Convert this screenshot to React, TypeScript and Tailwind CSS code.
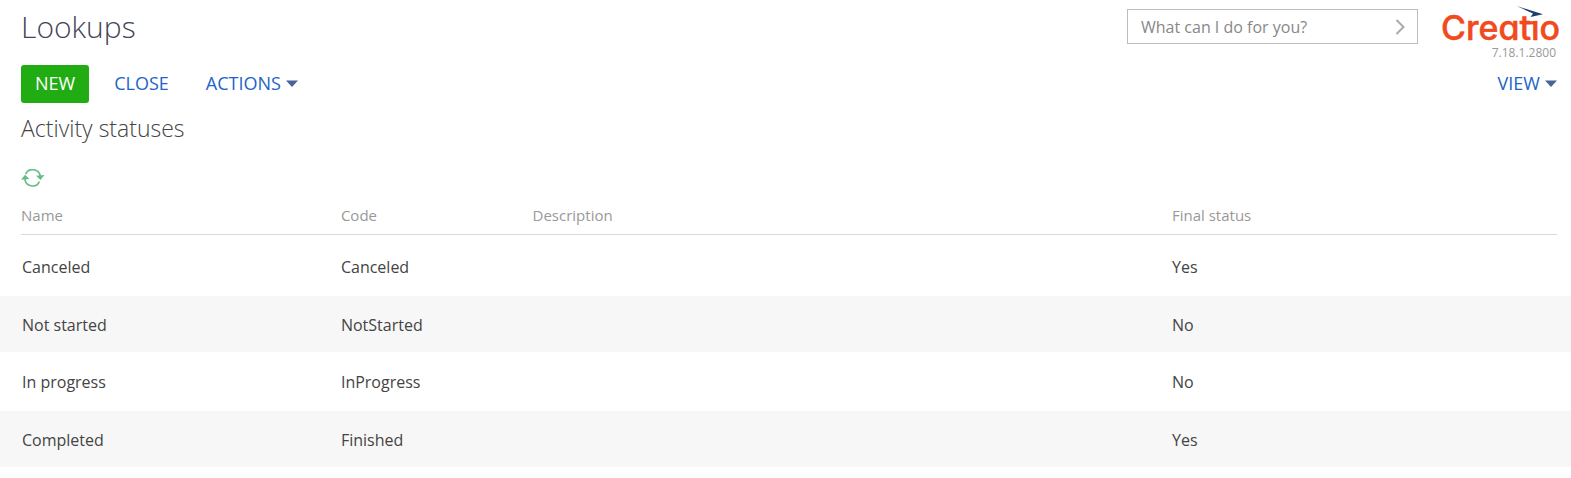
import { useState } from 'react';

type Status = {
  name: string;
  code: string;
  description: string;
  isFinal: boolean;
};

const statuses: Status[] = [
  { name: 'Canceled', code: 'Canceled', description: '', isFinal: true },
  { name: 'Not started', code: 'NotStarted', description: '', isFinal: false },
  { name: 'In progress', code: 'InProgress', description: '', isFinal: false },
  { name: 'Completed', code: 'Finished', description: '', isFinal: true },
];

function Caret() {
  return (
    <svg viewBox="0 0 12 7" className="h-[7px] w-3 fill-[#4a6396]" aria-hidden="true">
      <path d="M0 0.5h12L6 7z" />
    </svg>
  );
}

function Logo() {
  return (
    <div className="flex flex-col items-end">
      <svg viewBox="0 0 118 38" className="h-[38px] w-[118px] overflow-visible" role="img" aria-label="Creatio">
        <text
          x="-1"
          y="34"
          fontSize="34"
          fontWeight="500"
          fill="#f04a1d"
          stroke="#f04a1d"
          strokeWidth="0.5"
          className="font-['Inter',sans-serif] [font-feature-settings:'cv11']"
        >
          Creatio
        </text>
        {/* the bird takes the place of the dot on the i */}
        <path d="M87.5 6h9v8.5h-9z" fill="#ffffff" />
        <path d="M84 15.2h10v3.2h-10z" fill="#f04a1d" />
        <path d="M74.7 0L101 8.2 88.5 11 91 7.6z" fill="#1d3f6e" />
      </svg>
      <span className="pt-px pr-1 text-[12px] leading-4 text-[#999999]">7.18.1.2800</span>
    </div>
  );
}

function RefreshIcon() {
  return (
    <svg viewBox="0 0 24 18" className="h-[18px] w-6" aria-hidden="true">
      <g fill="none" stroke="#64bd86" strokeWidth="1.6">
        <path d="M4.6 5.2A7.6 7.4 0 0 1 19.2 7.5" />
        <path d="M18.4 12.6A7.6 7.4 0 0 1 3.9 10" />
      </g>
      <path d="M15 6.8l8.4-.8-3.9 5zM0 10.8l4-5 4.4 4.2z" fill="#64bd86" />
    </svg>
  );
}

export default function App() {
  const [question, setQuestion] = useState('');

  return (
    <div className="bg-white pb-3 font-['Open_Sans',sans-serif] text-[#444444]">
      <header className="flex items-start justify-between pr-[11px] pl-[21px]">
        <h1 className="pt-[7px] text-[30px] leading-10 font-light text-[#444455]">Lookups</h1>
        <div className="flex items-start gap-6 pt-[6px]">
          <form
            onSubmit={(e) => e.preventDefault()}
            className="mt-[3px] flex h-[35px] w-[291px] items-center border border-[#bdbdbd] pr-3 pl-[13px]"
          >
            <input
              type="text"
              aria-label="Command line"
              placeholder="What can I do for you?"
              value={question}
              onChange={(e) => setQuestion(e.target.value)}
              className="min-w-0 flex-1 text-[16px] outline-none placeholder:text-[#888888]"
            />
            <button type="submit" aria-label="Run command">
              <svg viewBox="0 0 10 16" className="h-4 w-[10px]" fill="none" stroke="#aaaaaa" strokeWidth="2">
                <path d="M1.5 1l7 7-7 7" />
              </svg>
            </button>
          </form>
          <Logo />
        </div>
      </header>

      <div className="flex items-center justify-between pt-1 pr-[14px] pl-[21px] text-[18px] text-[#2064c8]">
        <div className="flex items-center">
          <button type="button" className="h-[38px] rounded-[3px] bg-[#22ac14] px-[14px] pb-[2px] text-white">
            NEW
          </button>
          <button type="button" className="ml-[25px] pb-[2px]">
            CLOSE
          </button>
          <button type="button" className="ml-[37px] flex items-center gap-[5px] pb-[2px]">
            ACTIONS
            <Caret />
          </button>
        </div>
        <button type="button" className="flex items-center gap-[5px] pb-[2px]">
          VIEW
          <Caret />
        </button>
      </div>

      <h2 className="pt-[9px] pl-[21px] text-[23px] leading-8 font-light">Activity statuses</h2>

      <div className="flex pt-[25px] pl-[21px]">
        <button type="button" aria-label="Refresh">
          <RefreshIcon />
        </button>
      </div>

      <table className="mt-4 w-full table-fixed text-left">
        <colgroup>
          <col className="w-[21.7%]" />
          <col className="w-[12.2%]" />
          <col className="w-[40.7%]" />
          <col />
        </colgroup>
        <thead className="text-[15px] leading-6 text-[#999999]">
          <tr>
            <th className="pb-[2px] pl-[21px] font-normal">
              <div className="border-b border-[#d9d9d9] pb-[7px]">Name</div>
            </th>
            <th className="pb-[2px] font-normal">
              <div className="border-b border-[#d9d9d9] pb-[7px]">Code</div>
            </th>
            <th className="pb-[2px] font-normal">
              <div className="border-b border-[#d9d9d9] pb-[7px]">Description</div>
            </th>
            <th className="pr-[14px] pb-[2px] font-normal">
              <div className="border-b border-[#d9d9d9] pb-[7px]">Final status</div>
            </th>
          </tr>
        </thead>
        <tbody className="text-[16px] leading-6">
          {statuses.map((status) => (
            <tr key={status.name} className="h-[59px] even:h-14 even:bg-[#f7f7f7]">
              <td className="pt-px pl-[22px]">{status.name}</td>
              <td className="pt-px">{status.code}</td>
              <td className="pt-px">{status.description}</td>
              <td className="pt-px">{status.isFinal ? 'Yes' : 'No'}</td>
            </tr>
          ))}
        </tbody>
      </table>
    </div>
  );
}
